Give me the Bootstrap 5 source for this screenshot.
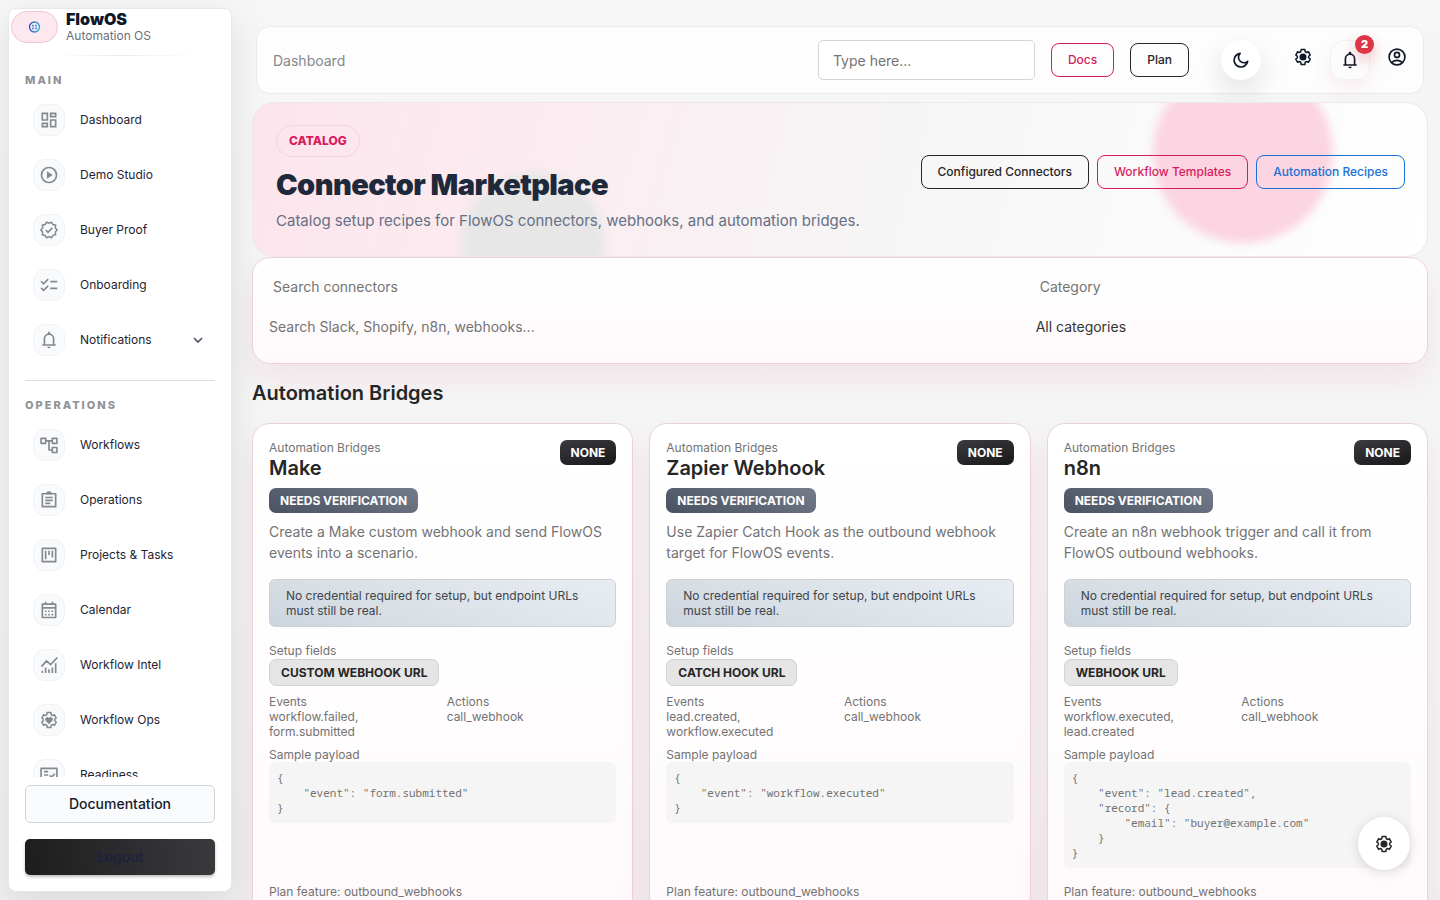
<!DOCTYPE html>
<html lang="en">
<head>
<meta charset="utf-8">
<meta name="viewport" content="width=device-width, initial-scale=1">
<title>FlowOS – Connector Marketplace</title>
<link href="https://cdn.jsdelivr.net/npm/bootstrap@5.3.0/dist/css/bootstrap.min.css" rel="stylesheet">
<style>
  :root { --pink: #d81b60; --ink: #0f172a; --muted: #737373; }
  body { font-family: Inter, "Liberation Sans", sans-serif; font-size: 14px; line-height: 21px; color: #262626; background: linear-gradient(180deg, #f6f6f6, #f4f5f5 60%, #f1f1f2); }
  .icon { width: 20px; height: 20px; flex: none; display: block; fill: none; stroke: currentColor; stroke-width: 2; }
  .icon .solid { fill: currentColor; stroke: none; }

  .side { width: 224px; margin: 8px 0 8px 8px; background: #fff; border: 1px solid #e6e8eb; border-radius: 8px; box-shadow: 0 12px 36px rgba(15,23,42,.1); flex: none; }
  .brand { padding: 2px 2px 0; height: 48px; }
  .brand-mark { width: 47px; height: 32px; border-radius: 16px; background: #fde8ef; border: 1px solid #efc6d3; }
  .brand-name { font-size: 16px; line-height: 17px; font-weight: 900; color: var(--ink); }
  .brand-sub { font-size: 12px; line-height: 16px; color: #6b7078; }
  .fade-line { height: 1px; background: linear-gradient(90deg, transparent 20%, #e9ebee 50%, transparent 85%); }
  .side-scroll { overflow-y: auto; scrollbar-width: none; min-height: 0; }
  .side-scroll::-webkit-scrollbar, .page::-webkit-scrollbar { display: none; }
  .side-title { font-size: 11px; line-height: 16px; font-weight: 800; letter-spacing: 2px; color: #8f9297; padding: 0 16px; margin: 0 0 4px; }
  .side-link { height: 55px; padding: 0 24px; font-size: 12px; color: #1e2433; text-decoration: none; }
  .side-link .tile { width: 32px; height: 32px; border-radius: 12px; background: #f9fafb; border: 1px solid #f0f2f4; color: #85888d; margin-right: 15px; }
  .side-rule { margin: 13px 16px 16px; height: 1px; background: #dcdee1; }
  .side-foot { padding: 8px 16px 16px; }
  .side-foot .btn { font-size: 14px; line-height: 20px; font-weight: 500; border-radius: 5px; color: #141b2d; }
  .btn-doc { background: #f9fbfc; border: 1px solid #d0d4d7; padding: 8px; }
  .btn-out { background: linear-gradient(80deg, #1d1d1d, #3a393d); border: 0; padding: 8px; color: #1b2140 !important; box-shadow: 0 2px 3px rgba(0,0,0,.25); }

  .page { padding: 26px 12px 0 20px; overflow-y: auto; scrollbar-width: none; }
  .topbar { margin: 0 4px 8px; padding: 0 16px; height: 68px; background: #fdfdfd; border: 1px solid #eaebec; border-radius: 14px; }
  .topbar .crumb { color: #85888c; text-decoration: none; font-size: 14px; }
  .topbar .form-control { width: 217px; height: 40px; padding: 1px 14px 0; font-size: 14px; border: 1px solid #d2d6da; border-radius: 5px; }
  .form-control::placeholder { color: #737373; opacity: 1; }
  .btn-line { font-size: 12px; line-height: 18px; font-weight: 500; padding: 7px 16px; border-radius: 8px; border: 1px solid currentColor; color: #262626; }
  .btn-line.pink { color: var(--pink); }
  .btn-line.blue { color: #1a6fd8; }
  .icon-btn { border: 0; background: none; padding: 0; color: var(--ink); }
  .lifted { padding-bottom: 6px; }
  .moon-btn { width: 40px; height: 40px; border-radius: 50%; background: #fff; box-shadow: 0 12px 28px rgba(15,23,42,.12); margin: 0 32px; }
  .bell-btn { width: 40px; height: 40px; border-radius: 14px; background: #fcfcfd; border: 1px solid #f2f2f4; box-shadow: 0 8px 20px rgba(216,27,96,.08); margin: 0 17px; }
  .count { top: -6px; right: -5px; width: 19px; height: 19px; border-radius: 50%; background: #dc3545; color: #fff; font-size: 11px; line-height: 19px; font-weight: 900; box-shadow: 0 6px 14px rgba(220,53,69,.3); }

  .hero { border: 1px solid #eee6e9; border-radius: 22px; padding: 22px 22px 25px 23px; background: linear-gradient(105deg, #fde4ec 0%, #fbecf0 25%, #f6f6f6 56%, #fff 100%); overflow: hidden; }
  .hero > .orb { position: absolute; border-radius: 50%; filter: blur(4px); }
  .orb-pink { width: 180px; height: 180px; right: 94px; top: -40px; background: #fbd5e1; }
  .orb-grey { width: 144px; height: 144px; left: 208px; bottom: -60px; background: #e7e7e7; }
  .eyebrow { font-size: 12px; line-height: 18px; font-weight: 800; color: var(--pink); border: 1px solid #f6d3de; border-radius: 16px; padding: 6px 12px; }
  .hero h1 { font-size: 29px; line-height: 34px; font-weight: 900; color: #1e293b; margin: 11px 0 9px; letter-spacing: -.02em; }
  .hero p { font-size: 15px; line-height: 20px; color: #667085; margin: 0; }
  .hero-actions { padding-bottom: 13px; }

  .panel { background: linear-gradient(180deg, #fff 0%, #fffdfe 50%, #fef8fa 100%); border: 1px solid #ead2da; border-radius: 18px; box-shadow: 0 16px 32px rgba(216,27,96,.08); padding: 16px; }
  .filters { padding-bottom: 18px; }
  .filters label { padding: 2px 4px; margin-bottom: 9px; color: var(--muted); }
  .filters .form-control, .filters .form-select { border: 0; background: none; padding: 8px 0; font-size: 14px; line-height: 21px; color: #333; border-radius: 0; }
  h2.group { font-size: 20px; line-height: 25px; font-weight: 600; margin: 17px 0; }
  .connector { min-height: 530px; }
  .tiny { font-size: 12px; line-height: 15px; color: var(--muted); }
  .connector h3 { font-size: 20px; line-height: 25px; font-weight: 600; margin: 1px 0 7px; }
  .summary { color: var(--muted); margin: 8px 0 0; }
  .tag { display: inline-block; font-size: 12px; line-height: 13px; font-weight: 700; padding: 6px 11px; border-radius: 7px; color: #fff; text-transform: uppercase; }
  .tag-dark { background: linear-gradient(165deg, #3b3b40, #18181a); }
  .tag-slate { background: linear-gradient(20deg, #495261, #747b8a); }
  .tag-light { background: #e5e5e5; color: #262626; border: 1px solid #d3d3d3; }
  .setup { margin: 1px 0 8px; }
  .note { font-size: 12px; line-height: 15px; color: #40454b; padding: 8px 16px; border: 1px solid #c9d1d9; border-radius: 6px; background: linear-gradient(20deg, #ccd4de, #d9e0e5 35%, #e8edf3); margin: 16px 0; }
  .payload { font-family: "Noto Sans Mono", "DejaVu Sans Mono", monospace; font-size: 11px; line-height: 15px; color: #737373; background: #f5f5f5; border-radius: 6px; padding: 8px; margin: 0 0 16px; overflow: hidden; }
  .fab { position: fixed; right: 30px; bottom: 30px; width: 52px; height: 53px; border-radius: 50%; background: #fff; box-shadow: 0 2px 12px rgba(0,0,0,.14); color: #262626; }
</style>
</head>
<body class="d-flex vh-100 overflow-hidden">
<svg class="d-none" aria-hidden="true">
  <symbol id="i-dash" viewBox="0 0 24 24"><path d="M4 4h6v8H4zM14 4h6v4h-6zM14 12h6v8h-6zM4 16h6v4H4z"/></symbol>
  <symbol id="i-play" viewBox="0 0 24 24"><circle cx="12" cy="12" r="9"/><path fill="currentColor" stroke="none" d="M9.500 7.500v9l7-4.500z"/></symbol>
  <symbol id="i-proof" viewBox="0 0 24 24"><path transform="translate(1.3 1.3) scale(.89)" d="M23 12l-2.440-2.790.34-3.690-3.610-.82-1.890-3.200L12 2.960 8.600 1.500 6.710 4.690 3.100 5.500l.34 3.700L1 12l2.440 2.790-.34 3.700 3.610.82L8.600 22.500l3.400-1.470 3.400 1.460 1.890-3.190 3.610-.82-.34-3.690z"/><path d="M8 12l2.800 2.800L16 9.500"/></symbol>
  <symbol id="i-check" viewBox="0 0 24 24"><path d="M2.500 7.500L5.500 10.500 11 5M2.500 15.500L5.500 18.500 11 13M13.500 8H22M13.500 16H22"/></symbol>
  <symbol id="i-bell" viewBox="0 0 24 24"><path d="M4 18h16M6.500 18v-7.500a5.500 5.500 0 0111 0V18"/><path fill="currentColor" stroke="none" d="M10 20h4a2 2 0 01-4 0zM10.500 5V3.500a1.500 1.500 0 013 0V5z"/></symbol>
  <symbol id="i-flow" viewBox="0 0 24 24"><path stroke-linejoin="round" d="M2.500 4h5.500v6H2.500zM16 4h5.500v6H16zM16 15h5.500v6H16zM8 7h8M12 7v11h4"/></symbol>
  <symbol id="i-clip" viewBox="0 0 24 24"><path stroke-linejoin="round" d="M4 4.500h16V20H4zM7.500 9h9M7.500 12.500h9M7.500 16h6"/><path fill="currentColor" stroke="none" d="M8.500 5a3.500 3.500 0 017 0z"/></symbol>
  <symbol id="i-board" viewBox="0 0 24 24"><path stroke-linejoin="round" d="M4 4h16v16H4zM8 7v10M12 7v5M16 7v8"/></symbol>
  <symbol id="i-cal" viewBox="0 0 24 24"><path stroke-linejoin="round" d="M4 5h16v16H4zM4 9.500h16M8 2v3M16 2v3"/><path stroke-dasharray="2 2" d="M7 13.500h10.500M7 17.500h10.500"/></symbol>
  <symbol id="i-intel" viewBox="0 0 24 24"><path d="M3 14l6-7 5 4.500L22 3M4 19v2.500M8 15v6.500M12 17v4.500M16 15v6.500M20 10v11.500"/></symbol>
  <symbol id="i-cog" viewBox="0 0 24 24"><path stroke-linejoin="round" transform="translate(1.1 1.1) scale(.91)" d="M19.430 12.980c.04-.32.07-.64.07-.98 0-.34-.03-.66-.07-.98l2.110-1.650-2.500-4.320-2.490 1c-.52-.4-1.080-.73-1.690-.98L14.460 2H9.540l-.41 3.070c-.61.25-1.170.59-1.690.98l-2.490-1-2.500 4.320 2.110 1.650c-.04.32-.07.65-.07.98s.03.66.07.98l-2.110 1.650 2.500 4.320 2.490-1c.52.4 1.080.73 1.690.98L9.540 22h4.920l.4-3.070c.61-.25 1.170-.59 1.690-.98l2.490 1 2.500-4.320z"/></symbol>
  <symbol id="i-heart" viewBox="0 0 24 24"><path fill="currentColor" stroke="none" d="M12 17l-4-4a2.500 2.500 0 014-3.500A2.500 2.500 0 0116 13z"/></symbol>
  <symbol id="i-fact" viewBox="0 0 24 24"><path stroke-linejoin="round" d="M2.500 4h19v16h-19zM6 8h5M6 12h5M6 16h5M13 12.500l2 2L19 10.500"/></symbol>
  <symbol id="i-user" viewBox="0 0 24 24"><circle cx="12" cy="12" r="9.500"/><circle cx="12" cy="9.500" r="3"/><path d="M5.500 18.500c4-3 9-3 13 0"/></symbol>
  <symbol id="i-moon" viewBox="0 0 24 24"><path stroke-linejoin="round" d="M11 4a8.200 8.200 0 109 9.500A6 6 0 0111 4z"/></symbol>
</svg>

<aside class="side d-flex flex-column">
  <div class="brand d-flex gap-2">
    <div class="brand-mark d-flex align-items-center justify-content-center">
      <svg width="14" height="14" viewBox="0 0 14 14" aria-hidden="true">
        <defs><linearGradient id="lg"><stop offset="0" stop-color="#4f46c8"/><stop offset="1" stop-color="#26b5c0"/></linearGradient></defs>
        <circle cx="6.500" cy="7" r="5" fill="#e8f2fb" stroke="url(#lg)" stroke-width="1.400"/>
        <path d="M5 4.800v1.600M8 4.800v1.600M5 7.600v1.600M8 7.600v1.600" stroke="#4565c4" stroke-width="1.400"/>
      </svg>
    </div>
    <div><div class="brand-name">FlowOS</div><div class="brand-sub">Automation OS</div></div>
  </div>
  <div class="fade-line"></div>
  <nav class="side-scroll flex-grow-1 pt-3" aria-label="Main">
    <h6 class="side-title">MAIN</h6>
    <a href="#" class="side-link d-flex align-items-center"><span class="tile d-flex align-items-center justify-content-center"><svg class="icon"><use href="#i-dash"/></svg></span>Dashboard</a>
    <a href="#" class="side-link d-flex align-items-center"><span class="tile d-flex align-items-center justify-content-center"><svg class="icon"><use href="#i-play"/></svg></span>Demo Studio</a>
    <a href="#" class="side-link d-flex align-items-center"><span class="tile d-flex align-items-center justify-content-center"><svg class="icon"><use href="#i-proof"/></svg></span>Buyer Proof</a>
    <a href="#" class="side-link d-flex align-items-center"><span class="tile d-flex align-items-center justify-content-center"><svg class="icon"><use href="#i-check"/></svg></span>Onboarding</a>
    <a href="#" class="side-link d-flex align-items-center"><span class="tile d-flex align-items-center justify-content-center"><svg class="icon"><use href="#i-bell"/></svg></span>Notifications
      <svg class="ms-auto" width="18" height="18" viewBox="0 0 18 18" fill="none" stroke="#4b5563" stroke-width="1.600" aria-hidden="true"><path d="M5 7l4 4 4-4"/></svg></a>
    <div class="side-rule"></div>
    <h6 class="side-title">OPERATIONS</h6>
    <a href="#" class="side-link d-flex align-items-center"><span class="tile d-flex align-items-center justify-content-center"><svg class="icon"><use href="#i-flow"/></svg></span>Workflows</a>
    <a href="#" class="side-link d-flex align-items-center"><span class="tile d-flex align-items-center justify-content-center"><svg class="icon"><use href="#i-clip"/></svg></span>Operations</a>
    <a href="#" class="side-link d-flex align-items-center"><span class="tile d-flex align-items-center justify-content-center"><svg class="icon"><use href="#i-board"/></svg></span>Projects &amp; Tasks</a>
    <a href="#" class="side-link d-flex align-items-center"><span class="tile d-flex align-items-center justify-content-center"><svg class="icon"><use href="#i-cal"/></svg></span>Calendar</a>
    <a href="#" class="side-link d-flex align-items-center"><span class="tile d-flex align-items-center justify-content-center"><svg class="icon"><use href="#i-intel"/></svg></span>Workflow Intel</a>
    <a href="#" class="side-link d-flex align-items-center"><span class="tile d-flex align-items-center justify-content-center"><svg class="icon"><use href="#i-cog"/><use href="#i-heart"/></svg></span>Workflow Ops</a>
    <a href="#" class="side-link d-flex align-items-center"><span class="tile d-flex align-items-center justify-content-center"><svg class="icon"><use href="#i-fact"/></svg></span>Readiness</a>
  </nav>
  <div class="side-foot d-grid gap-3">
    <a href="#" class="btn btn-doc">Documentation</a>
    <button type="button" class="btn btn-out">Logout</button>
  </div>
</aside>

<main class="page flex-grow-1">
  <header class="topbar d-flex align-items-center">
    <a href="#" class="crumb me-auto">Dashboard</a>
    <div class="d-flex align-items-center gap-3">
      <input type="text" class="form-control" placeholder="Type here..." aria-label="Search">
      <a href="#" class="btn btn-line pink">Docs</a>
      <a href="#" class="btn btn-line">Plan</a>
    </div>
    <button type="button" class="icon-btn moon-btn d-flex align-items-center justify-content-center" aria-label="Dark mode"><svg class="icon"><use href="#i-moon"/></svg></button>
    <button type="button" class="icon-btn lifted" aria-label="Settings"><svg class="icon"><use href="#i-cog"/><circle class="solid" cx="10" cy="10" r="3.500"/></svg></button>
    <button type="button" class="icon-btn bell-btn position-relative d-flex align-items-center justify-content-center" aria-label="Notifications"><svg class="icon"><use href="#i-bell"/></svg><span class="count position-absolute">2</span></button>
    <button type="button" class="icon-btn lifted" aria-label="Account"><svg class="icon"><use href="#i-user"/></svg></button>
  </header>

  <section class="hero position-relative">
    <div class="orb orb-pink"></div>
    <div class="orb orb-grey"></div>
    <div class="position-relative d-flex align-items-center justify-content-between">
      <div>
        <span class="eyebrow d-inline-block">CATALOG</span>
        <h1>Connector Marketplace</h1>
        <p>Catalog setup recipes for FlowOS connectors, webhooks, and automation bridges.</p>
      </div>
      <div class="hero-actions d-flex gap-2">
        <a href="#" class="btn btn-line">Configured Connectors</a>
        <a href="#" class="btn btn-line pink">Workflow Templates</a>
        <a href="#" class="btn btn-line blue">Automation Recipes</a>
      </div>
    </div>
  </section>

  <form class="panel filters">
    <div class="row g-2">
      <div class="col-8">
        <label for="q" class="d-block">Search connectors</label>
        <input id="q" type="text" class="form-control" placeholder="Search Slack, Shopify, n8n, webhooks...">
      </div>
      <div class="col-4">
        <label for="cat" class="d-block">Category</label>
        <select id="cat" class="form-select"><option>All categories</option></select>
      </div>
    </div>
  </form>

  <h2 class="group">Automation Bridges</h2>
  <div class="row g-3">
    <div class="col-4">
      <article class="panel connector h-100 d-flex flex-column">
        <div class="d-flex justify-content-between align-items-start">
          <div><div class="tiny">Automation Bridges</div><h3>Make</h3></div>
          <span class="tag tag-dark">None</span>
        </div>
        <div class="d-flex"><span class="tag tag-slate">Needs verification</span></div>
        <p class="summary">Create a Make custom webhook and send FlowOS events into a scenario.</p>
        <div class="note">No credential required for setup, but endpoint URLs must still be real.</div>
        <div class="tiny">Setup fields</div>
        <div class="setup d-flex"><span class="tag tag-light">Custom webhook URL</span></div>
        <div class="row gx-2 tiny mb-2">
          <div class="col-6"><div>Events</div><div>workflow.failed,<br>form.submitted</div></div>
          <div class="col-6"><div>Actions</div><div>call_webhook</div></div>
        </div>
        <div class="tiny">Sample payload</div>
        <pre class="payload">{
    "event": "form.submitted"
}</pre>
        <div class="tiny mt-auto mb-5">Plan feature: outbound_webhooks</div>
      </article>
    </div>
    <div class="col-4">
      <article class="panel connector h-100 d-flex flex-column">
        <div class="d-flex justify-content-between align-items-start">
          <div><div class="tiny">Automation Bridges</div><h3>Zapier Webhook</h3></div>
          <span class="tag tag-dark">None</span>
        </div>
        <div class="d-flex"><span class="tag tag-slate">Needs verification</span></div>
        <p class="summary">Use Zapier Catch Hook as the outbound webhook target for FlowOS events.</p>
        <div class="note">No credential required for setup, but endpoint URLs must still be real.</div>
        <div class="tiny">Setup fields</div>
        <div class="setup d-flex"><span class="tag tag-light">Catch hook URL</span></div>
        <div class="row gx-2 tiny mb-2">
          <div class="col-6"><div>Events</div><div>lead.created,<br>workflow.executed</div></div>
          <div class="col-6"><div>Actions</div><div>call_webhook</div></div>
        </div>
        <div class="tiny">Sample payload</div>
        <pre class="payload">{
    "event": "workflow.executed"
}</pre>
        <div class="tiny mt-auto mb-5">Plan feature: outbound_webhooks</div>
      </article>
    </div>
    <div class="col-4">
      <article class="panel connector h-100 d-flex flex-column">
        <div class="d-flex justify-content-between align-items-start">
          <div><div class="tiny">Automation Bridges</div><h3>n8n</h3></div>
          <span class="tag tag-dark">None</span>
        </div>
        <div class="d-flex"><span class="tag tag-slate">Needs verification</span></div>
        <p class="summary">Create an n8n webhook trigger and call it from FlowOS outbound webhooks.</p>
        <div class="note">No credential required for setup, but endpoint URLs must still be real.</div>
        <div class="tiny">Setup fields</div>
        <div class="setup d-flex"><span class="tag tag-light">Webhook URL</span></div>
        <div class="row gx-2 tiny mb-2">
          <div class="col-6"><div>Events</div><div>workflow.executed,<br>lead.created</div></div>
          <div class="col-6"><div>Actions</div><div>call_webhook</div></div>
        </div>
        <div class="tiny">Sample payload</div>
        <pre class="payload">{
    "event": "lead.created",
    "record": {
        "email": "buyer@example.com"
    }
}</pre>
        <div class="tiny mt-auto mb-5">Plan feature: outbound_webhooks</div>
      </article>
    </div>
  </div>
</main>
<button type="button" class="icon-btn fab d-flex align-items-center justify-content-center" aria-label="Configure"><svg class="icon"><use href="#i-cog"/><circle class="solid" cx="10" cy="10" r="3.500"/></svg></button>
<script src="https://cdn.jsdelivr.net/npm/bootstrap@5.3.0/dist/js/bootstrap.bundle.min.js"></script>
</body>
</html>
